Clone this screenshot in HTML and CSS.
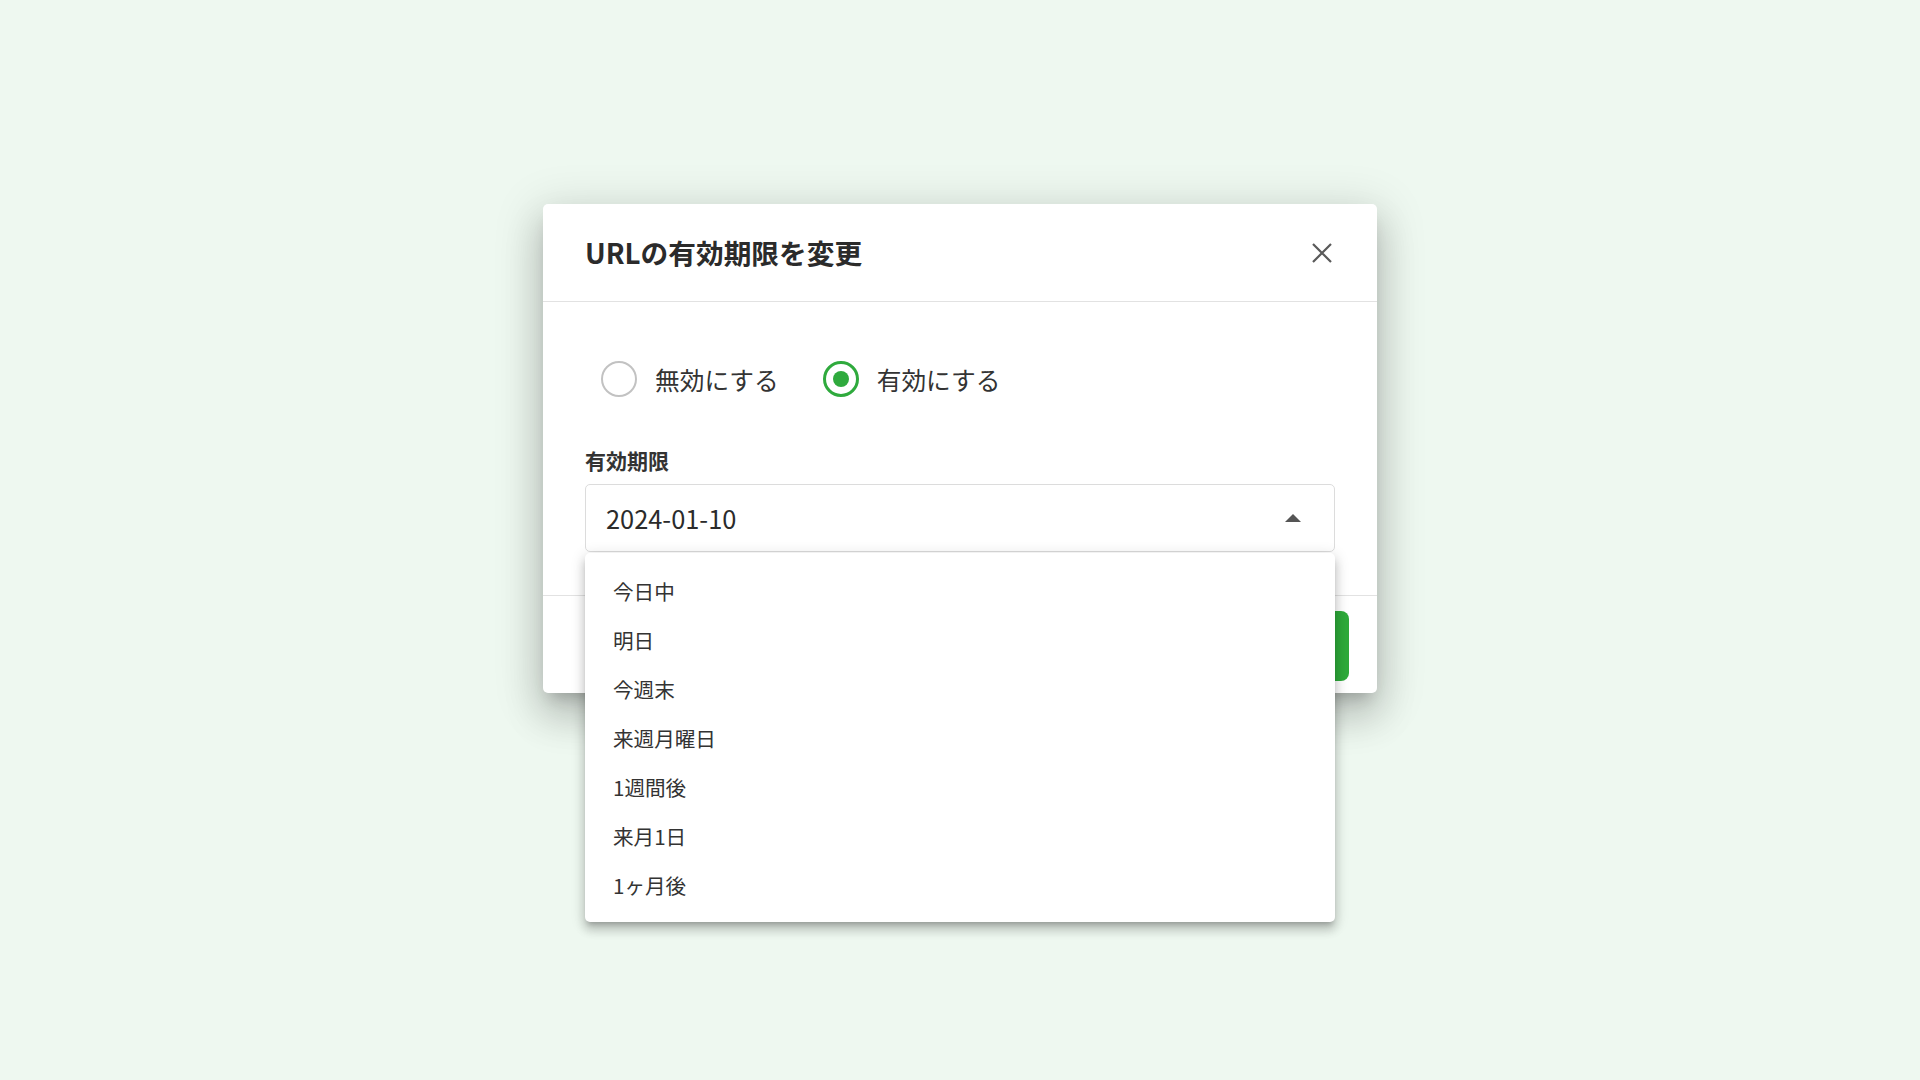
FILE: index.html
```html
<!DOCTYPE html>
<html lang="ja">
<head>
<meta charset="utf-8">
<title>URLの有効期限を変更</title>
<link rel="stylesheet" href="styles.css">
</head>
<body>
<div class="page">
  <div class="dialog">
    <div class="dialog-header">
      <h2 class="dialog-title">URLの有効期限を変更</h2>
      <button class="close-btn" aria-label="閉じる">
        <svg width="20" height="20" viewBox="0 0 20 20"><path d="M1 1 L19 19 M19 1 L1 19" stroke="#5a5a5a" stroke-width="2.2" fill="none"/></svg>
      </button>
    </div>
    <div class="dialog-body">
      <div class="radio-group">
        <label class="radio">
          <span class="radio-circle"></span>
          <span class="radio-label">無効にする</span>
        </label>
        <label class="radio radio-checked">
          <span class="radio-circle"><span class="radio-dot"></span></span>
          <span class="radio-label">有効にする</span>
        </label>
      </div>
      <div class="field-label">有効期限</div>
      <div class="select-wrap">
        <div class="select">
          <span class="select-value">2024-01-10</span>
          <span class="select-arrow"></span>
        </div>
        <ul class="menu">
          <li class="menu-item">今日中</li>
          <li class="menu-item">明日</li>
          <li class="menu-item">今週末</li>
          <li class="menu-item">来週月曜日</li>
          <li class="menu-item">1週間後</li>
          <li class="menu-item">来月1日</li>
          <li class="menu-item">1ヶ月後</li>
        </ul>
      </div>
    </div>
    <div class="dialog-footer">
      <button class="primary-btn">変更する</button>
    </div>
  </div>
</div>
</body>
</html>
```

FILE: styles.css
```css
html, body {
  margin: 0;
  padding: 0;
}
body {
  background: #eef8f0;
  font-family: "Noto Sans CJK JP", "Noto Sans", sans-serif;
  color: #333;
  width: 1920px;
  height: 1080px;
  overflow: hidden;
}
.page {
  display: flex;
  flex-direction: column;
  align-items: center;
  padding-top: 204px;
}
.dialog {
  width: 834px;
  background: #fff;
  border-radius: 5px;
  box-shadow: 0 11px 15px -7px rgba(0,0,0,.2), 0 24px 38px 3px rgba(0,0,0,.14), 0 9px 46px 8px rgba(0,0,0,.12);
}
.dialog-header {
  height: 97px;
  border-bottom: 1.5px solid #e2e2e2;
  display: flex;
  align-items: center;
  justify-content: space-between;
  padding: 0 45px 0 42px;
}
.dialog-title {
  margin: 0;
  font-size: 27.7px;
  font-weight: 700;
  color: #2b2b2b;
  line-height: 1;
  padding-top: 1px;
}
.close-btn {
  border: 0;
  background: none;
  padding: 0;
  width: 20px;
  height: 20px;
  display: flex;
}
.dialog-body {
  padding: 42px 42px 43px;
}
.radio-group {
  display: flex;
  align-items: center;
  height: 70px;
  padding-left: 16px;
  gap: 44px;
}
.radio {
  display: flex;
  align-items: center;
  gap: 18px;
}
.radio-circle {
  box-sizing: border-box;
  width: 36px;
  height: 36px;
  border-radius: 50%;
  border: 2.5px solid #c2c2c2;
  display: flex;
  align-items: center;
  justify-content: center;
}
.radio-checked .radio-circle {
  border: 3px solid #2faa3d;
}
.radio-dot {
  width: 16px;
  height: 16px;
  border-radius: 50%;
  background: #2faa3d;
}
.radio-label {
  font-size: 24.7px;
  line-height: 1;
  color: #333;
}
.field-label {
  margin-top: 32px;
  font-size: 21px;
  font-weight: 700;
  line-height: 28px;
  color: #333;
}
.select-wrap {
  position: relative;
  margin-top: 10px;
}
.select {
  box-sizing: border-box;
  height: 68px;
  border: 1.5px solid #dcdcdc;
  border-radius: 5px;
  display: flex;
  align-items: center;
  justify-content: space-between;
  padding: 0 33px 0 20px;
}
.select-value {
  font-size: 25.4px;
  line-height: 1;
  color: #2b2b2b;
  padding-top: 2px;
}
.select-arrow {
  width: 0;
  height: 0;
  border-left: 8px solid transparent;
  border-right: 8px solid transparent;
  border-bottom: 8px solid #555;
}
.menu {
  position: absolute;
  left: 0;
  right: 0;
  top: 69px;
  margin: 0;
  padding: 13px 0;
  list-style: none;
  background: #fff;
  border-radius: 5px;
  box-shadow: 0 5px 5px -3px rgba(0,0,0,.2), 0 8px 10px 1px rgba(0,0,0,.14), 0 3px 14px 2px rgba(0,0,0,.12);
  z-index: 10;
}
.menu-item {
  height: 49px;
  display: flex;
  align-items: center;
  padding-left: 28px;
  font-size: 20.6px;
  color: #333;
}
.dialog-footer {
  height: 97px;
  border-top: 1.5px solid #e2e2e2;
  display: flex;
  align-items: center;
  justify-content: flex-end;
  padding: 0 28px;
}
.primary-btn {
  height: 70px;
  width: 160px;
  border: 0;
  border-radius: 8px;
  background: #2eaa3a;
  color: #fff;
  font-family: inherit;
  font-size: 20px;
  font-weight: 700;
  margin-top: 2px;
}
```
